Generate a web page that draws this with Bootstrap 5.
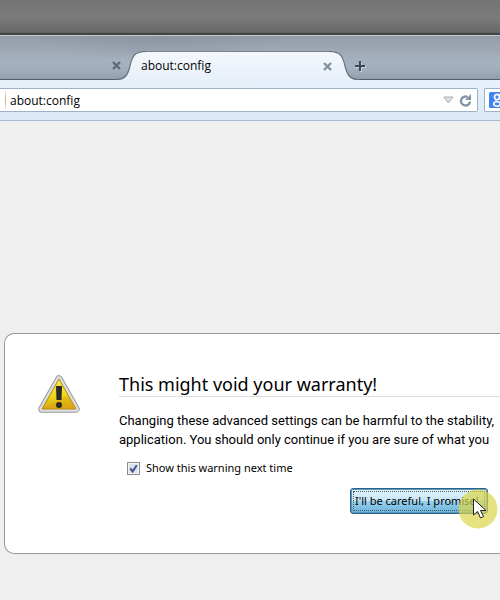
<!DOCTYPE html>
<html lang="en">
<head>
<meta charset="utf-8">
<meta name="viewport" content="width=device-width, initial-scale=1">
<title>about:config</title>
<link href="https://cdn.jsdelivr.net/npm/bootstrap@5.3.0/dist/css/bootstrap.min.css" rel="stylesheet">
<style>
body{font-family:"Open Sans","Noto Sans",sans-serif;font-size:12px;line-height:18px;color:#000;background:#efefef;overflow-x:hidden}
svg{display:block}
.titlebar{height:36px;background:linear-gradient(#747474,#7b7b7b 50%,#686868 90%,#505050);border-bottom:1px solid #c3c9d1;box-shadow:inset 0 -2px #444}
.tabstrip{height:44px;background:radial-gradient(ellipse 130px 24px at 160px 0,#88909b99,#88909b00),linear-gradient(#949ca7,#a5b1be 55%,#a3afbc 75%,#919dab);box-shadow:inset 0 -1px #4d5f75}
.tab-rest{width:121px;margin-right:-5px}
.plain-btn{border:0;background:none;padding:0;line-height:0}
.tab-on{height:29px}
.tab-face{width:183px;background:linear-gradient(#f4f8fc,#e8f0fa);border-top:1px solid #76828f}
.tab-name{color:#000;text-decoration:none;margin-left:-5px}
.tab-close{margin-right:-3px;z-index:1}
.new-tab{margin-left:-4px}
.toolbar{height:41px;background:linear-gradient(#e8f1fa,#dbe8f7);border-bottom:1px solid #a3bcd5;gap:6px}
.field{height:24px;background:#fff;border:1px solid #9db2c8}
.url{border-left:0;border-radius:0 2px 2px 0;padding-left:5px}
.url input,.search input{border:0;outline:0;background:none;min-width:0;padding:2px 0 0;color:#000}
.caret-line{width:1px;height:18px;background:linear-gradient(#f8e5d4,#dfa477,#f8e5d4)}
.search{width:16px;border-right:0;border-radius:2px 0 0 2px;padding-left:4px}
.search input{width:0}
main{padding:212px 0 46px 4px}
.notice{background:#fff;border:1px solid #989898;border-right:0;border-radius:10px 0 0 10px;padding:41px 0 39px 32px;gap:37px}
.notice-body{min-width:0}
h1{font-family:"Noto Sans","Open Sans",sans-serif;font-size:18px;line-height:18px;font-weight:400;border-bottom:1px solid #dedede;padding-bottom:3px;margin:0 0 14px;white-space:nowrap}
.msg{font-family:Roboto,"Open Sans",sans-serif;font-size:13px;line-height:19px;white-space:nowrap;margin:0 0 10px}
.small-text{font-family:"Noto Sans","Open Sans",sans-serif;font-size:11px}
.tick{appearance:none;width:13px;height:13px;margin:0 6px 0 0;border:1px solid #8b8d90;box-shadow:inset 0 0 0 1px #f4f4f4;background:#dbe2ea url("data:image/svg+xml,%3Csvg xmlns='http://www.w3.org/2000/svg' viewBox='0 0 11 11'%3E%3Cpath d='M2.3 5.3 4.6 8.5 8.8 2.2' fill='none' stroke='%233e5393' stroke-width='2'/%3E%3C/svg%3E")}
.actions{padding:3px 12px 0 0}
.promise{height:26px;padding:0 4px;border:1px solid #2c628b;border-radius:3px;background:linear-gradient(#e5f4fc,#c4e5f6 48%,#98d1ef 52%,#68b3db);box-shadow:inset 0 0 0 1px #5796bd;white-space:nowrap;width:138px;line-height:18px;text-align:left;outline:1px dotted #555;outline-offset:-4px}
.halo{left:108px;top:1px;pointer-events:none}
</style>
<script src="https://cdn.jsdelivr.net/npm/bootstrap@5.3.0/dist/js/bootstrap.bundle.min.js"></script>
</head>
<body>
<header>
  <div class="titlebar"></div>
  <nav class="tabstrip d-flex align-items-end" aria-label="Tabs">
    <div class="tab-rest tab-on d-flex justify-content-end align-items-center">
      <button class="plain-btn" type="button" aria-label="Close tab"><svg width="9" height="9"><path d="m1 1 7 7M8 1 1 8" stroke="#5f6b79" stroke-width="2.4"/></svg></button>
    </div>
    <div class="tab-on d-flex">
      <svg width="30" height="29"><defs><linearGradient id="face" x2="0" y2="1"><stop stop-color="#f4f8fc"/><stop offset="1" stop-color="#e8f0fa"/></linearGradient></defs><path d="M0 29C10 28.500 12 23 14 15C16 6 18 .5 30 .5V29Z" fill="url(#face)"/><path d="M0 28.500C10 28.500 12 23 14 15C16 6 18 .5 30 .5" fill="none" stroke="#66747f" stroke-width="1.200"/></svg>
      <div class="tab-face d-flex align-items-center justify-content-between">
        <a class="tab-name" href="#">about:config</a>
        <button class="plain-btn tab-close position-relative" type="button" aria-label="Close about:config"><svg width="9" height="9"><path d="m1 1 7 7M8 1 1 8" stroke="#84909c" stroke-width="2.400"/></svg></button>
      </div>
      <svg width="30" height="29"><path d="M30 29C20 28.500 18 23 16 15C14 6 12 .5 0 .5V29Z" fill="url(#face)"/><path d="M30 28.500C20 28.500 18 23 16 15C14 6 12 .5 0 .5" fill="none" stroke="#66747f" stroke-width="1.200"/></svg>
    </div>
    <button class="plain-btn tab-on new-tab" type="button" aria-label="New tab"><svg width="11" height="12"><path d="M0 7h11M6 2v10" stroke="#c6d0da" stroke-width="2"/><path d="M0 6h10M5 1v10" stroke="#3c4754" stroke-width="2"/></svg></button>
  </nav>
  <div class="toolbar d-flex align-items-center">
    <div class="field url d-flex align-items-center flex-grow-1">
      <span class="caret-line me-1"></span>
      <input class="flex-grow-1" type="text" value="about:config" aria-label="Address">
      <button class="plain-btn" type="button" aria-label="History"><svg width="11" height="8"><path d="M.9 1h9L5.400 7Z" fill="#dde1e6" stroke="#a6afb9"/></svg></button>
      <button class="plain-btn ms-1 me-1" type="button" aria-label="Reload"><svg width="15" height="13"><path d="M12 7.500A4.500 4.500 0 1 1 9.500 3" fill="none" stroke="#8594a3" stroke-width="2.400"/><path d="M13 0v6H7Z" fill="#8594a3"/></svg></button>
    </div>
    <div class="field search d-flex align-items-center overflow-hidden">
      <svg class="flex-shrink-0" width="16" height="16"><rect width="16" height="16" rx="1.500" fill="#4283f0"/><g fill="none" stroke="#fff"><ellipse cx="8" cy="5" rx="2.500" ry="2.700" stroke-width="1.700"/><path d="M9 2.300h3.500M7.500 7.700c-2 1 0 1.500 2 2.300"/><ellipse cx="8" cy="12" rx="3.300" ry="2.200" stroke-width="1.600"/></g></svg>
      <input type="text" aria-label="Search">
    </div>
  </div>
</header>
<main>
  <section class="notice d-flex align-items-start">
    <svg class="flex-shrink-0" width="45" height="41" viewBox="0 0 45 41"><defs><linearGradient id="gold" x2="0" y2="1"><stop stop-color="#f5ee45"/><stop offset=".55" stop-color="#ecd91e"/><stop offset="1" stop-color="#dba515"/></linearGradient></defs><path d="M22 4 39 34H5Z" fill="#9b9b9b" stroke="#9b9b9b" stroke-width="7.500" stroke-linejoin="round"/><path d="M22 4 39 34H5Z" fill="#ddd" stroke="#dedede" stroke-width="5.500" stroke-linejoin="round"/><path d="M22 4 39 34H5Z" fill="url(#gold)" stroke="#b38a14" stroke-width="1" stroke-linejoin="round"/><path d="M5 34 31 20l8 14Z" fill="#d89b0e" opacity=".35"/><path d="M19 11h6l-.5 14h-5Z" fill="#292925"/><circle cx="22" cy="30" r="3" fill="#292925"/></svg>
    <div class="notice-body flex-grow-1">
      <h1>This might void your warranty!</h1>
      <p class="msg">Changing these advanced settings can be harmful to the stability,<br>application. You should only continue if you are sure of what you</p>
      <div class="small-text d-flex align-items-center ms-2 mb-2">
        <input class="tick" type="checkbox" id="again" checked><label for="again">Show this warning next time</label>
      </div>
      <div class="actions d-flex justify-content-end">
        <div class="position-relative">
          <button class="promise small-text" type="button">I'll be careful, I promise!</button>
          <svg class="halo position-absolute" width="40" height="40"><circle cx="20" cy="20" r="19.500" fill="#dbd648" opacity=".7"/><path d="M15.500 10v16l4-3.500 3 6.500 3-1.500-3-6h5.500Z" fill="#fff" stroke="#222" stroke-width="1"/></svg>
        </div>
      </div>
    </div>
  </section>
</main>
</body>
</html>
